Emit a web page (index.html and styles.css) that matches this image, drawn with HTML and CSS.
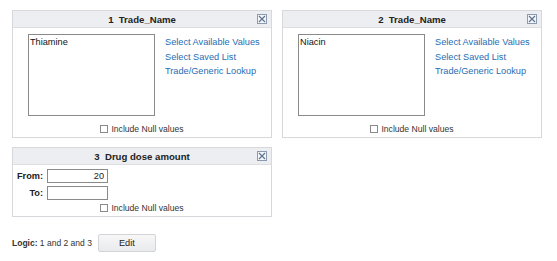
FILE: index.html
```html
<!DOCTYPE html>
<html lang="en">
<head>
    <meta charset="UTF-8">
    <title>Query Criteria</title>
    <link rel="stylesheet" href="styles.css">
</head>
<body>

    <div class="panels">
        <div class="panel">
            <div class="panel-head">
                <span class="panel-title">1&nbsp;&nbsp;Trade_Name</span>
                <span class="close-btn"><svg width="10" height="10" viewBox="0 0 10 10"><rect x="0.5" y="0.5" width="9" height="9" fill="#f4f6f9" stroke="#8a9bb0"/><path d="M2 2 L8 8 M8 2 L2 8" stroke="#5d7391" stroke-width="1.2"/></svg></span>
            </div>
            <div class="list-body">
                <div class="value-box">Thiamine</div>
                <div class="links">
                    <a href="#">Select Available Values</a>
                    <a href="#">Select Saved List</a>
                    <a href="#">Trade/Generic Lookup</a>
                </div>
            </div>
            <label class="null-row"><input type="checkbox"> Include Null values</label>
        </div>

        <div class="panel">
            <div class="panel-head">
                <span class="panel-title">2&nbsp;&nbsp;Trade_Name</span>
                <span class="close-btn"><svg width="10" height="10" viewBox="0 0 10 10"><rect x="0.5" y="0.5" width="9" height="9" fill="#f4f6f9" stroke="#8a9bb0"/><path d="M2 2 L8 8 M8 2 L2 8" stroke="#5d7391" stroke-width="1.2"/></svg></span>
            </div>
            <div class="list-body">
                <div class="value-box">Niacin</div>
                <div class="links">
                    <a href="#">Select Available Values</a>
                    <a href="#">Select Saved List</a>
                    <a href="#">Trade/Generic Lookup</a>
                </div>
            </div>
            <label class="null-row"><input type="checkbox"> Include Null values</label>
        </div>

        <div class="panel">
            <div class="panel-head">
                <span class="panel-title">3&nbsp;&nbsp;Drug dose amount</span>
                <span class="close-btn"><svg width="10" height="10" viewBox="0 0 10 10"><rect x="0.5" y="0.5" width="9" height="9" fill="#f4f6f9" stroke="#8a9bb0"/><path d="M2 2 L8 8 M8 2 L2 8" stroke="#5d7391" stroke-width="1.2"/></svg></span>
            </div>
            <div class="range-body">
                <label class="range-label">From:</label>
                <input class="range-input" type="text" value="20">
                <label class="range-label">To:</label>
                <input class="range-input" type="text" value="">
            </div>
            <label class="null-row range-null"><input type="checkbox"> Include Null values</label>
        </div>
    </div>

    <div class="logic">
        <span><b>Logic:</b> 1 and 2 and 3</span>
        <button class="edit-btn">Edit</button>
    </div>

</body>
</html>
```

FILE: styles.css
```css
body {
    margin: 0;
    padding: 10px 0 0 12px;
    font-family: "Liberation Sans", Arial, sans-serif;
    font-size: 9.2px;
    color: #222;
    background: #ffffff;
}
.panels {
    display: grid;
    grid-template-columns: 260px 260px;
    column-gap: 10px;
    row-gap: 9px;
    align-items: start;
}
.panel {
    border: 1px solid #d6d8db;
    background: #ffffff;
}
.panel-head {
    position: relative;
    height: 16px;
    background: #eceef1;
    border-bottom: 1px solid #dcdee1;
    display: flex;
    align-items: center;
    justify-content: center;
}
.panel-title {
    font-weight: bold;
    font-size: 9.6px;
    color: #222;
}
.close-btn {
    position: absolute;
    right: 4px;
    top: 3px;
    width: 10px;
    height: 10px;
    display: block;
}
.close-btn svg {
    display: block;
}
.list-body {
    display: flex;
    padding: 6px 0 0 15px;
}
.value-box {
    width: 123px;
    height: 76px;
    border: 1px solid #8a8a8a;
    padding: 2px 1px;
    line-height: 11px;
    color: #111;
}
.links {
    display: flex;
    flex-direction: column;
    margin-left: 10px;
    padding-top: 1px;
}
.links a {
    color: #1f6db4;
    text-decoration: none;
    line-height: 14.5px;
}
.null-row {
    display: flex;
    align-items: center;
    justify-content: center;
    height: 12px;
    margin: 7px 0 2px;
    font-size: 8.6px;
    color: #333;
}
.range-null {
    margin-top: 2px;
}
.null-row input {
    width: 8px;
    height: 8px;
    margin: 0 3px 0 0;
    appearance: none;
    border: 1px solid #8a8a8a;
    background: #fff;
}
.range-body {
    display: grid;
    grid-template-columns: 30px 61px;
    column-gap: 4px;
    row-gap: 3px;
    align-items: center;
    padding: 4px 0 0 0;
}
.range-label {
    font-weight: bold;
    text-align: right;
}
.range-input {
    box-sizing: border-box;
    width: 61px;
    height: 14px;
    border: 1px solid #8a8a8a;
    padding: 0 3px;
    font-family: "Liberation Sans", Arial, sans-serif;
    font-size: 9.2px;
    text-align: right;
    color: #222;
}
.logic {
    display: flex;
    align-items: center;
    margin-top: 17px;
    font-size: 8.5px;
    color: #333;
}
.edit-btn {
    margin-left: 6px;
    width: 58px;
    height: 18px;
    border: 1px solid #d2d4d7;
    border-radius: 2px;
    background: linear-gradient(#f7f7f7, #e9eaec);
    font-family: "Liberation Sans", Arial, sans-serif;
    font-size: 9.2px;
    color: #222;
}
```
